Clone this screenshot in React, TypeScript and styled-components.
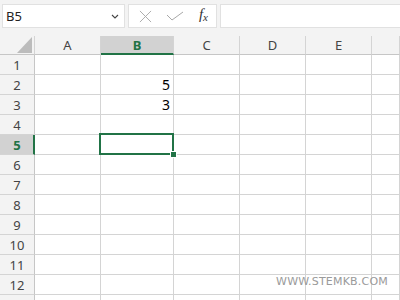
import styled, { createGlobalStyle } from "styled-components";

const GREEN = "#217346";
const LINE = "#d4d4d4";

const columns = ["A", "B", "C", "D", "E", ""];
const widths = [35, 66, 73, 66, 66, 66];
const rows = Array.from({ length: 13 }, (_, i) => i + 1);

const values: Record<string, string> = { B2: "5", B3: "3" };

const selCol = "B";
const selRow = 5;

const App = () => {
  return (
    <Page>
      <GlobalStyle />
      <Toolbar>
        <NameBox>
          <NameText>B5</NameText>
          <Chevron viewBox="0 0 8 5">
            <path d="M1 1 L4 4 L7 1" fill="none" stroke="#444" strokeWidth="1.1" />
          </Chevron>
        </NameBox>
        <ActionBox>
          <ActionIcon viewBox="0 0 14 14">
            <path d="M1 1 L13 13 M13 1 L1 13" stroke="#a8a8a8" strokeWidth="1" fill="none" />
          </ActionIcon>
          <ActionIcon viewBox="0 0 18 10" style={{ width: 18, height: 10 }}>
            <path d="M1 4 L6 9 L17 1" stroke="#a8a8a8" strokeWidth="1" fill="none" />
          </ActionIcon>
          <Fx>
            f<sub>x</sub>
          </Fx>
        </ActionBox>
        <FormulaInput />
      </Toolbar>
      <Sheet cols={widths.map((w) => w + "px").join(" ") + " 1fr"}>
        <Corner>
          <Triangle />
        </Corner>
        {columns.map((c, i) => (
          <ColHead key={"h" + i} active={c === selCol}>
            {c}
          </ColHead>
        ))}
        {rows.map((r) => (
          <Row key={r} r={r} />
        ))}
      </Sheet>
      <Watermark>WWW.STEMKB.COM</Watermark>
    </Page>
  );
};

const Row = ({ r }: { r: number }) => (
  <>
    <RowHead active={r === selRow}>{r}</RowHead>
    {columns.map((c, i) => {
      const key = c + r;
      const selected = c === selCol && r === selRow;
      return (
        <Cell key={key + i}>
          {values[key]}
          {selected && (
            <Selection>
              <Handle />
            </Selection>
          )}
        </Cell>
      );
    })}
  </>
);

export default App;

const GlobalStyle = createGlobalStyle`
  html, body {
    margin: 0;
    padding: 0;
    background: #ffffff;
    overflow: hidden;
  }
  * {
    box-sizing: border-box;
  }
`;

const Page = styled.div`
  position: relative;
  width: 400px;
  height: 300px;
  overflow: hidden;
  font-family: "Noto Sans", "Open Sans", sans-serif;
  background: #ffffff;
`;

const Toolbar = styled.div`
  height: 36px;
  background: #f3f3f3;
  display: flex;
  align-items: flex-start;
  gap: 3px;
  padding: 4px 0 0 2px;
`;

const NameBox = styled.div`
  width: 123px;
  height: 24px;
  background: #ffffff;
  border: 1px solid #e1e1e1;
  display: flex;
  align-items: center;
  justify-content: space-between;
  padding: 0 5px 0 3px;
`;

const NameText = styled.span`
  font-size: 13px;
  color: #222;
`;

const Chevron = styled.svg`
  width: 8px;
  height: 5px;
`;

const ActionBox = styled.div`
  width: 89px;
  height: 24px;
  background: #ffffff;
  border: 1px solid #e1e1e1;
  display: flex;
  align-items: center;
  padding: 0 8px 0 10px;
  justify-content: space-between;
`;

const ActionIcon = styled.svg`
  width: 13px;
  height: 13px;
`;

const Fx = styled.span`
  font-family: "Liberation Serif", "DejaVu Serif", serif;
  font-style: italic;
  font-size: 15px;
  color: #333;
  line-height: 1;
  margin-top: -2px;
  sub {
    font-size: 11px;
    vertical-align: -2px;
  }
`;

const FormulaInput = styled.div`
  flex: 1;
  height: 24px;
  background: #ffffff;
  border: 1px solid #e1e1e1;
  border-right: none;
`;

const Sheet = styled.div<{ cols: string }>`
  display: grid;
  grid-template-columns: ${({ cols }) => cols};
  grid-template-rows: 19px;
  grid-auto-rows: 20px;
`;

const Corner = styled.div`
  background: #f3f3f3;
  border-right: 1px solid ${LINE};
  border-bottom: 1px solid #c6c6c6;
  display: flex;
  align-items: flex-end;
  justify-content: flex-end;
  padding: 0 2px 1px 0;
`;

const Triangle = styled.div`
  width: 15px;
  height: 16px;
  background: #bcbcbc;
  clip-path: polygon(100% 0, 100% 100%, 0 100%);
`;

const ColHead = styled.div<{ active?: boolean }>`
  background: ${({ active }) => (active ? "#d2d2d2" : "#f3f3f3")};
  border-right: 1px solid ${LINE};
  border-bottom: ${({ active }) => (active ? `2px solid ${GREEN}` : "1px solid #c6c6c6")};
  color: ${({ active }) => (active ? GREEN : "#444")};
  font-weight: ${({ active }) => (active ? 700 : 400)};
  font-size: 13px;
  display: flex;
  align-items: center;
  justify-content: center;
  padding-top: ${({ active }) => (active ? "1px" : "0")};
`;

const RowHead = styled.div<{ active?: boolean }>`
  background: ${({ active }) => (active ? "#d2d2d2" : "#f3f3f3")};
  border-right: ${({ active }) => (active ? `2px solid ${GREEN}` : "1px solid #c6c6c6")};
  border-bottom: 1px solid ${LINE};
  color: ${({ active }) => (active ? GREEN : "#444")};
  font-weight: ${({ active }) => (active ? 700 : 400)};
  font-size: 13px;
  display: flex;
  align-items: center;
  justify-content: center;
  padding-left: ${({ active }) => (active ? "1px" : "0")};
`;

const Cell = styled.div`
  position: relative;
  border-right: 1px solid ${LINE};
  border-bottom: 1px solid ${LINE};
  font-size: 14px;
  color: #000;
  display: flex;
  align-items: center;
  justify-content: flex-end;
  padding-right: 3px;
`;

const Selection = styled.div`
  position: absolute;
  top: -2px;
  left: -2px;
  right: -1px;
  bottom: -1px;
  border: 2px solid ${GREEN};
  z-index: 2;
`;

const Handle = styled.div`
  position: absolute;
  right: -5px;
  bottom: -5px;
  width: 7px;
  height: 7px;
  background: ${GREEN};
  border: 1px solid #ffffff;
`;

const Watermark = styled.div`
  position: absolute;
  right: 12px;
  bottom: 12px;
  font-family: "DejaVu Sans", sans-serif;
  font-size: 11px;
  letter-spacing: 0.2px;
  color: #9a9a9a;
`;
